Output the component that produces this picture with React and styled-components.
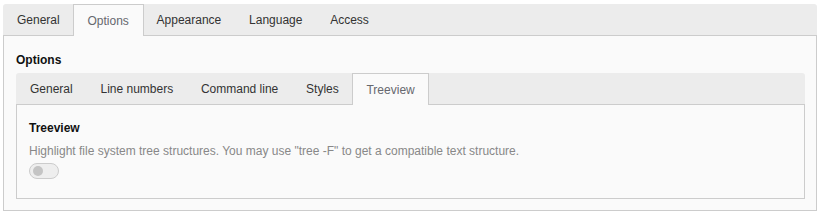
import React, { useState } from 'react'
import styled, { createGlobalStyle } from 'styled-components'

const GlobalStyle = createGlobalStyle`
  html, body {
    margin: 0;
    padding: 0;
    background: #ffffff;
  }
  body {
    font-family: "Liberation Sans", Arial, sans-serif;
    font-size: 12px;
    color: #333;
  }
`

const Page = styled.div`
  padding: 4px 4px 4px 3px;
`

const TabBox = styled.div`
  display: flex;
  flex-direction: column;
  width: ${(props) => props.width}px;
`

const TabBar = styled.div`
  display: flex;
  height: 32px;
  background: #ececec;
  border-bottom: 1px solid #cccccc;
  border-radius: 3px 3px 0 0;
  box-sizing: border-box;
`

const Tab = styled.div`
  display: flex;
  align-items: center;
  padding: 0 13.75px 0 13px;
  height: 31px;
  box-sizing: border-box;
  cursor: pointer;
  color: #333;
  border: 1px solid transparent;
  border-bottom: none;
  margin-left: -1px;
  &:first-child {
    margin-left: 0;
  }
  &.active {
    background: #fafafa;
    color: #66686e;
    border-color: #cccccc;
    margin-bottom: -1px;
    height: 32px;
  }
`

const Panel = styled.div`
  background: #fafafa;
  border: 1px solid #cccccc;
  border-top: none;
  padding: ${(props) => props.pad};
`

const Heading = styled.div`
  font-weight: bold;
  color: #111;
  line-height: 16px;
  margin-bottom: ${(props) => props.gap || 0}px;
`

const Description = styled.div`
  color: #888;
  line-height: 16px;
`

const Toggle = styled.button`
  display: block;
  position: relative;
  width: 30px;
  height: 16px;
  margin-top: 4px;
  padding: 0;
  border: 1px solid #cccccc;
  border-radius: 8px;
  background: ${(props) => (props.on ? '#8fb8e0' : '#eeeeee')};
  cursor: pointer;
  &::after {
    content: '';
    position: absolute;
    top: 2px;
    left: ${(props) => (props.on ? '17px' : '3px')};
    width: 10px;
    height: 10px;
    border-radius: 50%;
    background: #c4c4c4;
  }
`

const Tabs = ({ items, active, onSelect }) => (
  <TabBar>
    {items.map((item) => (
      <Tab key={item} className={item === active ? 'active' : ''} onClick={() => onSelect(item)}>
        {item}
      </Tab>
    ))}
  </TabBar>
)

export default function App() {
  const [outer, setOuter] = useState('Options')
  const [inner, setInner] = useState('Treeview')
  const [treeview, setTreeview] = useState(false)

  return (
    <Page>
      <GlobalStyle />
      <TabBox width={814}>
        <Tabs
          items={['General', 'Options', 'Appearance', 'Language', 'Access']}
          active={outer}
          onSelect={setOuter}
        />
        <Panel pad='16px 11px 11px 12px'>
          <Heading gap={5}>Options</Heading>
          <TabBox width={789}>
            <Tabs
              items={['General', 'Line numbers', 'Command line', 'Styles', 'Treeview']}
              active={inner}
              onSelect={setInner}
            />
            <Panel pad='15px 12px 19px 12px'>
              <Heading gap={7}>Treeview</Heading>
              <Description>
                Highlight file system tree structures. You may use "tree -F" to get a compatible text structure.
              </Description>
              <Toggle on={treeview ? 1 : 0} onClick={() => setTreeview(!treeview)} />
            </Panel>
          </TabBox>
        </Panel>
      </TabBox>
    </Page>
  )
}
